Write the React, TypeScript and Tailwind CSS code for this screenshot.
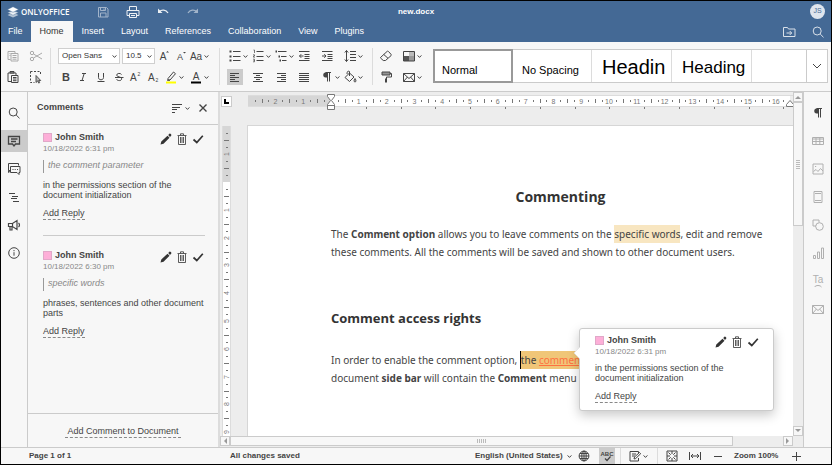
import React from "react";

type Kids = { children?: React.ReactNode };

/* ---------- drawing helpers ---------- */

function Ico({ children, className = "" }: Kids & { className?: string }) {
  return (
    <svg
      viewBox="0 0 16 16"
      className={"size-4 shrink-0 " + className}
      fill="none"
      stroke="currentColor"
      strokeWidth="1"
      aria-hidden="true"
    >
      {children}
    </svg>
  );
}

function Chevron({ className = "" }: { className?: string }) {
  return (
    <svg viewBox="0 0 5 5" className={"size-[5px] shrink-0 " + className} fill="none" stroke="currentColor" aria-hidden="true">
      <path d="M.6 1.4 2.5 3.4 4.4 1.4" />
    </svg>
  );
}

function Glyph({ children, size = 11, weight = 400 }: Kids & { size?: number; weight?: number }) {
  return (
    <text x="8" y="12" textAnchor="middle" fontSize={size} fontWeight={weight} fill="currentColor" stroke="none">
      {children}
    </text>
  );
}

/* ---------- icons ---------- */

const icons = {
  save: <path d="M3.5 3.5h8l1.500 1.500v8h-9.500zM5.500 3.500v3h5v-3M5.500 13v-4h5.500v4M9 4.500v1.500" />,
  print: (
    <>
      <path d="M4.500 6.500v-4h7v4M4.500 11.500h-2.500v-5h12v5h-2.500" />
      <path d="M4.500 9.500h7v4h-7zM6 11.500h4" />
    </>
  ),
  undo: (
    <>
      <path d="M3 4.500v4.500h4.500z" fill="currentColor" stroke="none" />
      <path d="M4.500 7.500c2-2.200 6.500-2 8.500 1.500" strokeWidth="1.300" />
    </>
  ),
  redo: (
    <>
      <path d="M13 4.500v4.500h-4.500z" fill="currentColor" stroke="none" />
      <path d="M11.500 7.500c-2-2.200-6.500-2-8.500 1.500" strokeWidth="1.300" />
    </>
  ),
  folder: <path d="M2.500 12.500v-9h4l1 1.500h6.500v7.500zM5.500 9h5M8.700 7l2 2-2 2" />,
  search: (
    <>
      <circle cx="7.200" cy="7" r="4" />
      <path d="M10.200 10 13.500 13.300" />
    </>
  ),
  copy: <path d="M5.500 11.500h-2.500v-8h7v2M6 5.500h7v7.500h-7zM4.500 5.500h1M7.500 7.500h4M7.500 9.500h4M7.500 11.200h4M4.500 7.500h1" />,
  paste: (
    <>
      <path d="M6 12.500h-3v-8.500h8v2" />
      <path d="M5 4h4v-1.500h-4zM6.500 6.500h6.500v7h-6.500zM8 8.500h3.500M8 10h3.500M8 11.700h3.500" />
    </>
  ),
  cut: (
    <>
      <circle cx="4" cy="5" r="1.700" />
      <circle cx="4" cy="11" r="1.700" />
      <path d="M5.500 6 14 11M5.500 10 14 5" />
    </>
  ),
  select: (
    <>
      <path d="M2.500 2.500h10v4M2.500 2.500v11h4" strokeDasharray="2 1.500" />
      <path d="M8 6.500v7l1.700-1.600 1 2.200 1-.500-1-2.100h2z" fill="currentColor" fillOpacity=".35" strokeWidth=".900" />
    </>
  ),
  grow: (
    <>
      <Glyph size={10}>A</Glyph>
      <path d="M11 4.500 12.500 3 14 4.500z" fill="currentColor" stroke="none" />
    </>
  ),
  shrink: (
    <>
      <Glyph size={9}>A</Glyph>
      <path d="M11 4 12.500 5.500 14 4z" fill="currentColor" stroke="none" />
    </>
  ),
  caseAa: <Glyph size={10}>Aa</Glyph>,
  bold: <Glyph size={11} weight={700}>B</Glyph>,
  italic: <path d="M7 4.500h4M5 11.500h4M9.200 4.500 7 11.500" />,
  underline: <path d="M5.500 4v4.500c0 3 5 3 5 0v-4.500M4.500 12.500h7" />,
  strike: (
    <>
      <path d="M10.500 5.500c-.800-1.600-4.800-1.500-4.800.600 0 2.300 5 1.300 5 3.700 0 2.300-4.300 2.300-5.200.400" />
      <path d="M4 8.500h8.500" />
    </>
  ),
  sup: (
    <>
      <text x="2" y="12" fontSize="10" fill="currentColor" stroke="none">A</text>
      <text x="9.500" y="7" fontSize="5" fill="currentColor" stroke="none">2</text>
    </>
  ),
  sub: (
    <>
      <text x="2" y="12" fontSize="10" fill="currentColor" stroke="none">A</text>
      <text x="9.500" y="13" fontSize="5" fill="currentColor" stroke="none">2</text>
    </>
  ),
  marker: (
    <>
      <path d="M5 9.500 10.500 3l2 1.700-5.500 6.300H5zM4 11.200h3" />
      <path d="M3 13.500h10" stroke="#ffff00" strokeWidth="2" />
    </>
  ),
  color: (
    <>
      <text x="8" y="11" textAnchor="middle" fontSize="10" fill="currentColor" stroke="none">A</text>
      <path d="M3 13.500h10" stroke="#000" strokeWidth="2" />
    </>
  ),
  bullets: (
    <>
      <path d="M6 3.500h7.500M6 8.500h7.500M6 12.500h7.500" />
      <path d="M2.500 3.500h2M2.500 8.500h2M2.500 12.500h2" strokeWidth="2" />
    </>
  ),
  numbers: (
    <>
      <path d="M6.500 3.500h7M6.500 8.500h7M6.500 12.500h7" />
      <path d="M3.500 2h1v3M3 6.800h1.500v1.200h-1v1.200h1.500M3 11.200h1.500v2.600h-1.500M3.500 12.500h1" strokeWidth=".700" />
    </>
  ),
  multi: (
    <>
      <path d="M5 3.500h8.500M8 8.500h5.500M9 12.500h4.500" />
      <path d="M2.500 3.500h1.500M5.500 8.500h1.500M6.500 12.500h1.500" strokeWidth="2" />
    </>
  ),
  outdent: <path d="M3 3.500h10.500M8.500 6.500h5M8.500 8.500h5M8.500 10.500h5M3 12.500h10.500M7.500 8h-4M5.200 6.200 3.500 8l1.700 1.800" />,
  indent: <path d="M3 3.500h10.500M8.500 6.500h5M8.500 8.500h5M8.500 10.500h5M3 12.500h10.500M3 8h4M5.300 6.200 7 8l-1.700 1.800" />,
  spacing: <path d="M8 3.500h6M8 6.500h6M8 9.500h6M8 12.500h6M4.500 2.500v11M2.800 4.500 4.500 2.500 6.200 4.500M2.800 11.500l1.700 2 1.700-2" />,
  left: <path d="M3 4.500h9M3 6.500h5M3 8.500h9M3 10.500h5M3 12.500h9" />,
  center: <path d="M3 4.500h10M6 6.500h4M4 8.500h8M6 10.500h4M3 12.500h10" />,
  right: <path d="M4 4.500h9M8 6.500h5M4 8.500h9M8 10.500h5M4 12.500h9" />,
  justify: <path d="M3 4.500h10M3 6.500h10M3 8.500h10M3 10.500h10M3 12.500h10" />,
  pilcrow: (
    <>
      <path d="M8.500 3.500h-2c-3 0-3 5 0 5h2z" fill="currentColor" stroke="none" />
      <path d="M8.500 3.500v9M10.500 3.500v9M6.500 3.500h5.500" />
    </>
  ),
  bucket: <path d="M7.500 4 3 8.500l4.500 4 4.500-4.500zM7.500 7v-4.500c-2-1-2.500.500-2.500 2.500M13 9.500c-1.500 2-1 3.500 0 3.500s1.500-1.500 0-3.500z" />,
  eraser: <path d="M2.500 9.500 9 3.500c.600-.500 1-.500 1.500 0l2.500 2.800c.400.500.400 1 0 1.400l-5.500 4.800h-2.200l-2.700-2.400zM5.800 6.500l4.200 3.800" />,
  roller: (
    <>
      <path d="M4 3h8v3h-8z" fill="currentColor" fillOpacity=".55" />
      <path d="M12 4.500h1.500v3.500h-5v2" />
      <path d="M8 9.500v4" strokeWidth="2" />
    </>
  ),
  scheme: (
    <>
      <path d="M3 8h5v5h-5z" fill="#555" stroke="none" />
      <path d="M8 8h5v5h-5z" fill="#999" stroke="none" />
      <path d="M8 3h5v5h-5z" fill="#bbb" stroke="none" />
      <path d="M2.500 3.500h11v9.500h-11z" />
    </>
  ),
  mail: <path d="M2.500 4.500h11v8h-11zM2.500 4.500 8 9.500l5.500-5M2.500 12.500 6.500 8M13.500 12.500 9.500 8" />,
  comment: <path d="M2.500 3.500h11v7.500h-4l-1.500 2-1.500-2h-4zM5 6h6.500M5 8.500h5" strokeWidth="1.300" />,
  chat: <path d="M4.500 9.500h-2v-7h10v2M4.500 5.500h9.500v6h-1v2l-2-2h-6.500zM6.500 8.500h1M8.700 8.500h1M11 8.500h1M2.500 9.500v2l2-1.500" />,
  outline: <path d="M3 4.500h6M6 7.500h6M5 9.500h6M7 12.500h6" />,
  megaphone: <path d="M2.500 6.500h4l4.500-3v9l-4.500-3h-4zM6.500 6.500v3M4 9.500v3.500h2v-3.500M12.500 6c1.300 1 1.300 3 0 4" strokeWidth="1.200" />,
  info: (
    <>
      <circle cx="8" cy="8" r="5.300" />
      <path d="M8 7.200v3.500M8 5v1.200" />
    </>
  ),
  sort: <path d="M3 4.500h10M3 7.500h8M3 9.500h5M3 12.500h3" />,
  close: <path d="M4.500 4.500 11.500 11.500M11.500 4.500 4.500 11.500" strokeWidth="1.400" />,
  pencil: <path d="M2.500 13.500 3.300 10.500 9.500 4.700 11.500 6.700 5.500 12.700zM10.200 4l1.300-1.300c.700-.500 2.300.900 1.800 1.800L12 5.900z" fill="currentColor" stroke="none" />,
  trash: <path d="M3.500 4.500h9M6.500 4.300v-1.500h3v1.500M4.500 5v8.500h7v-8.500M6.500 6v6M8 6v6M9.500 6v6" strokeWidth=".800" />,
  check: <path d="M3.500 8.500 6.800 11.500 12.800 4.800" strokeWidth="1.700" />,
  table: <path d="M2.500 4.500h11v7h-11zM2.500 6h11M2.500 8.500h11M6 4.500v7M9.800 4.500v7" />,
  image: <path d="M3 3h10v10h-10zM3.500 10.500l2.500-2 2 2 2.500-3 2.500 2.500M5 5.500h1.200" />,
  page: <path d="M4 2.500h8v11h-8zM5 4.500h6M5 11.500h6" />,
  shape: (
    <>
      <path d="M6 9h-3v-6h6v2.500" />
      <circle cx="9.500" cy="9.500" r="3.800" />
    </>
  ),
  chart: <path d="M3.500 10.500h2v3h-2zM7.500 7h2v6.500h-2zM11.500 3h2v10.500h-2z" />,
  textArt: (
    <>
      <text x="8" y="10" textAnchor="middle" fontSize="10" fill="currentColor" stroke="none">Ta</text>
      <path d="M4.500 14c1.500-2 5.500-2 7 0" />
    </>
  ),
  globe: (
    <>
      <circle cx="8" cy="8" r="4.900" />
      <ellipse cx="8" cy="8" rx="2.200" ry="4.900" />
      <path d="M3 8h10M8 3v10M4 5.500h8M4 10.500h8" />
    </>
  ),
  spell: (
    <>
      <text x="8" y="8" textAnchor="middle" fontSize="6" fontWeight="700" fill="currentColor" stroke="none">ABC</text>
      <path d="M6 10.500 8 12.500 11.500 8.500" strokeWidth="1.200" />
    </>
  ),
  track: <path d="M11.500 5v-1.500h-8.500v9.500h8.500v-3M5 6h4M5 8h3M7 11l.500-2 5-4.500 1.200 1.200-5 4.800z" />,
  fitPage: <path d="M3 3h10v10h-10zM8 3v3M8 10v3M3 8h3M10 8h3M4.500 4.500l2.200 2.200M11.500 4.500 9.300 6.700M4.500 11.500l2.200-2.200M11.500 11.500 9.300 9.300" />,
  fitWidth: <path d="M2.500 4v8M13.500 4v8M4 8h8M6 6 4 8l2 2M10 6l2 2-2 2" />,
  minus: <path d="M4 8.500h8" />,
  plus: <path d="M4 8.500h9M8.500 4v9" />,
};

type IconName = keyof typeof icons;

/* ---------- top bar ---------- */

function TopBar() {
  const tabs = ["File", "Home", "Insert", "Layout", "References", "Collaboration", "View", "Plugins"];
  return (
    <header className="bg-[#446995] text-white">
      <div className="grid h-5 grid-cols-[1fr_auto_1fr] items-center pt-px">
        <div className="flex items-center">
          <a href="#home" className="flex w-[86px] items-center gap-[2px] pl-[6px]">
            <svg viewBox="0 0 12 12" className="size-3" aria-hidden="true">
              <path d="M6 6.800 11.500 9 6 11.600.500 9z" fill="#fff" fillOpacity=".6" />
              <path d="M6 4.400 11.500 6.600 6 9.200.500 6.600z" fill="#fff" fillOpacity=".8" stroke="#446995" strokeWidth=".4" />
              <path d="M6 .800 11.500 3.500 6 6.200.500 3.500z" fill="#fff" stroke="#446995" strokeWidth=".4" />
            </svg>
            <span className="font-['Open_Sans',sans-serif] text-[8px] font-semibold">ONLYOFFICE</span>
          </a>
          <div className="flex pl-2">
            {(["save", "print", "undo", "redo"] as IconName[]).map((n) => (
              <button
                key={n}
                aria-label={n}
                className={"flex w-[30px] " + (n === "save" || n === "redo" ? "opacity-50" : "opacity-90")}
              >
                <Ico>{icons[n]}</Ico>
              </button>
            ))}
          </div>
        </div>
        <h1 className="text-[8px] font-bold">new.docx</h1>
        <div className="flex justify-end pr-[6px]">
          <button className="flex size-[15px] items-center justify-center rounded-full bg-[#dfe5ee] text-[7px] text-[#446995]">JS</button>
        </div>
      </div>
      <div className="flex h-[21px] items-stretch">
        <nav className="flex flex-1">
          {tabs.map((t) => (
            <button
              key={t}
              className={
                t === "Home"
                  ? "bg-[#f7f7f7] px-[9px] text-[#333]"
                  : t === "File"
                    ? "pr-2 pl-[7px]"
                    : "pr-2 pl-[9px]"
              }
            >
              {t}
            </button>
          ))}
        </nav>
        <div className="flex items-center gap-[13px] pr-[5px] opacity-80">
          <button aria-label="Open file location"><Ico>{icons.folder}</Ico></button>
          <button aria-label="Search"><Ico>{icons.search}</Ico></button>
        </div>
      </div>
    </header>
  );
}

/* ---------- ribbon ---------- */

function Tool({ name, menu = false, active = false, dim = false }: { name: IconName; menu?: boolean; active?: boolean; dim?: boolean }) {
  return (
    <button aria-label={name} className={"flex w-[23px] items-center pl-[3px] " + (dim ? "text-[#aaa]" : "text-[#444]")}>
      <span className={active ? "bg-[#cbcbcb]" : ""}><Ico>{icons[name]}</Ico></span>
      {menu && <Chevron />}
    </button>
  );
}

function WideTool({ name }: { name: IconName }) {
  return (
    <button aria-label={name} className="flex w-[25px] items-center text-[#444]">
      <Ico>{icons[name]}</Ico>
      <Chevron />
    </button>
  );
}

function Divider() {
  return <div className="my-[6px] w-px shrink-0 bg-[#dcdcdc]" />;
}

function Picker({ label, value, className }: { label: string; value: string; className: string }) {
  return (
    <label className={"relative block " + className}>
      <select
        aria-label={label}
        className="h-4 w-full appearance-none rounded-none border border-[#cfcfcf] bg-white pl-[3px] text-[8px] text-[#333]"
      >
        <option>{value}</option>
      </select>
      <Chevron className="pointer-events-none absolute top-[6px] right-[3px]" />
    </label>
  );
}

const row = "flex h-4 items-center";

function Ribbon() {
  const styles = [
    { name: "Normal", size: "pt-1 text-[11px]" },
    { name: "No Spacing", size: "pt-[5px] text-[11px]" },
    { name: "Headin", size: "pt-[2px] text-[20px]" },
    { name: "Heading", size: "pt-[3px] text-[17px]" },
  ];
  return (
    <div className="flex h-[50px] shrink-0 border-b border-[#cbcbcb] bg-[#f7f7f7]">
      <div className="flex w-[49px] flex-col gap-[5px] pt-[6px] pl-px">
        <div className={row}><Tool name="copy" dim /><Tool name="cut" dim /></div>
        <div className={row}><Tool name="paste" /><Tool name="select" /></div>
      </div>
      <Divider />
      <div className="flex w-[168px] flex-col gap-[5px] pt-[6px] pl-[6px]">
        <div className={row + " pl-px"}>
          <Picker label="Font" value="Open Sans" className="w-[62px]" />
          <Picker label="Font size" value="10.5" className="ml-[2px] w-[33px]" />
          <button aria-label="Increase font size" className="w-[17px]"><Ico>{icons.grow}</Ico></button>
          <button aria-label="Decrease font size" className="w-4"><Ico>{icons.shrink}</Ico></button>
          <WideTool name="caseAa" />
        </div>
        <div className={row}>
          <div className="grid w-[106px] shrink-0 grid-cols-6 justify-items-center text-[#444]">
            {(["bold", "italic", "underline", "strike", "sup", "sub"] as IconName[]).map((n) => (
              <button key={n} aria-label={n}><Ico>{icons[n]}</Ico></button>
            ))}
          </div>
          <WideTool name="marker" />
          <WideTool name="color" />
        </div>
      </div>
      <Divider />
      <div className="flex w-[152px] flex-col gap-[5px] pt-[6px] pl-[4px]">
        <div className={row}>
          <Tool name="bullets" menu /><Tool name="numbers" menu /><Tool name="multi" menu />
          <Tool name="outdent" /><Tool name="indent" /><Tool name="spacing" menu />
        </div>
        <div className={row}>
          <Tool name="left" active /><Tool name="center" /><Tool name="right" />
          <Tool name="justify" /><Tool name="pilcrow" menu /><Tool name="bucket" menu />
        </div>
      </div>
      <Divider />
      <div className="flex w-[60px] shrink-0 flex-col gap-[5px] pt-[6px] pl-[2px]">
        <div className={row}><Tool name="eraser" /><Tool name="scheme" menu /></div>
        <div className={row}><Tool name="roller" /><Tool name="mail" menu /></div>
      </div>
      <div className="mt-[7px] mr-[3px] flex h-[34px] min-w-0 flex-1 border border-[#cbcbcb] bg-white">
        {styles.map((s, i) => (
          <button
            key={s.name}
            className={
              "flex w-20 shrink-0 items-start overflow-hidden leading-[30px] whitespace-nowrap text-black " +
              s.size +
              (i === 0 ? " -m-px border-2 border-[#999] pl-[7px]" : " border-r border-[#dcdcdc] pl-[10px]")
            }
          >
            {s.name}
          </button>
        ))}
        <div className="flex-1" />
        <button aria-label="More styles" className="flex w-[21px] items-center justify-center border-l border-[#cbcbcb] text-[#444]">
          <svg viewBox="0 0 10 6" className="h-[6px] w-[10px]" fill="none" stroke="currentColor" aria-hidden="true"><path d="M1 1 5 5 9 1" /></svg>
        </button>
      </div>
    </div>
  );
}

/* ---------- comments ---------- */

function CommentHead({ date }: { date: string }) {
  return (
    <div className="flex h-[22px] items-start justify-between">
      <div className="leading-[11px]">
        <div className="flex items-center gap-[3px] font-bold text-[#444]">
          <span className="size-[9px] border border-[#e0a8c8] bg-[#fdafd8]" />
          John Smith
        </div>
        <div className="text-[8px] leading-[11px] text-[#888]">{date}</div>
      </div>
      <div className="-mt-px -mr-px flex text-[#333]">
        <button aria-label="Edit"><Ico>{icons.pencil}</Ico></button>
        <button aria-label="Delete"><Ico>{icons.trash}</Ico></button>
        <button aria-label="Resolve"><Ico>{icons.check}</Ico></button>
      </div>
    </div>
  );
}

function CommentBody({ text, className }: { text: string; className: string }) {
  return (
    <>
      <p className={"leading-[10px] text-[#444] " + className}>{text}</p>
      <button className="mt-2 block border-b border-dashed border-[#888] text-left leading-[11px] text-[#444]">Add Reply</button>
    </>
  );
}

function Comments() {
  const items = [
    { date: "10/18/2022 6:31 pm", quote: "the comment parameter", text: "in the permissions section of the document initialization" },
    { date: "10/18/2022 6:30 pm", quote: "specific words", text: "phrases, sentences and other document parts" },
  ];
  return (
    <section className="flex w-[192px] shrink-0 flex-col border-r-2 border-[#dcdcdc] bg-[#f7f7f7]">
      <div className="flex h-[33px] items-center border-b border-[#cbcbcb] pr-[7px] pl-[9px] text-[#444]">
        <h2 className="flex-1 font-bold">Comments</h2>
        <button aria-label="Sort" className="flex w-[26px] items-center"><Ico>{icons.sort}</Ico><Chevron /></button>
        <button aria-label="Close"><Ico>{icons.close}</Ico></button>
      </div>
      <div className="flex-1 pr-[13px] pl-[15px]">
        {items.map((c, i) => (
          <article key={c.date} className={i === 0 ? "border-b border-[#cbcbcb] pt-[7px] pb-[15px]" : "pt-[14px]"}>
            <CommentHead date={c.date} />
            <blockquote className="mt-[6px] h-[13px] border-l border-[#999] pl-1 leading-[10px] text-[#888] italic">{c.quote}</blockquote>
            <CommentBody text={c.text} className="mt-[7px]" />
          </article>
        ))}
      </div>
      <div className="flex h-[34px] items-center justify-center border-t border-[#cbcbcb] pt-[3px]">
        <button className="border-b border-dashed border-[#888] px-[2px] leading-[11px] text-[#444]">Add Comment to Document</button>
      </div>
    </section>
  );
}

/* ---------- rulers ---------- */

const CM = 27.8;

function HorizontalRuler() {
  const zero = 83;
  const quarters = Array.from({ length: 78 }, (_, i) => i - 11);
  return (
    <svg className="h-4 w-[546px]" fill="#777" fontSize="7" aria-hidden="true">
      <rect x="0" y="2" width={zero} height="10" fill="#d6d6d6" />
      <rect x={zero} y="2" width="459" height="10" fill="#fff" />
      <path d="M0 1.500H546M0 12.500H546" stroke="#dcdcdc" />
      {quarters.map((q) => {
        const x = zero + (q * CM) / 4;
        if (q === 0 || x > 538) return null;
        if (q % 4 === 0) return <text key={q} x={x} y="9.500" textAnchor="middle">{Math.abs(q / 4)}</text>;
        return q % 2 === 0
          ? <rect key={q} x={Math.round(x)} y="5" width="1" height="4" />
          : <rect key={q} x={Math.round(x)} y="6" width="1" height="2" />;
      })}
      {Array.from({ length: 13 }, (_, i) => (
        <rect key={i} x={Math.round(zero + (i + 1) * 34.8)} y="13" width="1" height="2" />
      ))}
      <path d="M79.500.500h7v2l-3 4 3 4v5h-7v-5l3-4-3-4zM79.500 11.500h7" fill="#fff" stroke="#777" />
      <path d="M538.500 12.500h7v-2l-3.500-4-3.500 4z" fill="#fff" stroke="#777" />
    </svg>
  );
}

function VerticalRuler() {
  const zero = 56;
  const quarters = Array.from({ length: 45 }, (_, i) => i - 7);
  return (
    <svg className="h-[311px] w-[9px]" fill="#777" fontSize="7" aria-hidden="true">
      <rect width="9" height={zero} fill="#d6d6d6" />
      <rect y={zero} width="9" height="255" fill="#fff" />
      <path d="M.500 0V311M8.500 0V311" stroke="#dcdcdc" />
      {quarters.map((q) => {
        const y = zero + (q * CM) / 4;
        if (q === 0 || y > 308) return null;
        if (q % 4 === 0)
          return <text key={q} transform={`translate(7 ${Math.round(y)}) rotate(-90)`} textAnchor="middle">{Math.abs(q / 4)}</text>;
        return q % 2 === 0
          ? <rect key={q} x="2" y={Math.round(y)} width="5" height="1" />
          : <rect key={q} x="4" y={Math.round(y)} width="2" height="1" />;
      })}
    </svg>
  );
}

/* ---------- editor ---------- */

function ScrollArrow({ d, label }: { d: string; label: string }) {
  return (
    <button aria-label={label} className="flex size-[10px] shrink-0 items-center justify-center border border-[#cbcbcb] bg-[#f7f7f7]">
      <svg viewBox="0 0 6 6" className="size-[6px]" fill="#999" aria-hidden="true"><path d={d} /></svg>
    </button>
  );
}

function Balloon() {
  return (
    <aside className="absolute top-[202px] left-[331px] w-[195px] rounded-[3px] border border-[#cbcbcb] bg-white pt-[6px] pr-[13px] pb-[7px] pl-[15px] font-['Liberation_Sans',Arial,sans-serif] text-[9px] whitespace-normal shadow-[0_4px_12px_rgba(0,0,0,0.22)]">
      <svg viewBox="0 0 8 14" className="absolute top-[17px] -left-[7px] h-[14px] w-2" aria-hidden="true">
        <path d="M8 0 1 7 8 14z" fill="#fff" />
        <path d="M7 1 1 7 7 13" fill="none" stroke="#ddd" strokeWidth=".6" />
      </svg>
      <CommentHead date="10/18/2022 6:31 pm" />
      <CommentBody text="in the permissions section of the document initialization" className="mt-[6px]" />
    </aside>
  );
}

function Page() {
  return (
    <div className="relative min-w-0 flex-1 border-t border-l border-[#d6d6d6] bg-white pl-[83px] font-['Noto_Sans',sans-serif] text-[10px] leading-[18px] whitespace-nowrap text-[#444]">
      <h2 className="w-[459px] pt-[61px] text-center font-['Open_Sans',sans-serif] text-[14px] leading-5 font-bold text-[#333]">Commenting</h2>
      <p className="mt-[18px]">
        The <b>Comment option</b> allows you to leave comments on the{" "}
        <mark className="inline-block bg-[#f8e6c1] text-inherit">specific words</mark>, edit and remove
        <br />
        these comments. All the comments will be saved and shown to other document users.
      </p>
      <h3 className="mt-[47px] font-['Open_Sans',sans-serif] text-[13px] leading-5 font-bold text-[#333]">Comment access rights</h3>
      <p className="mt-[23px]">
        In order to enable the comment option,{" "}
        <mark className="inline-block bg-[#f0c678] text-inherit">
          <span className="border-l border-black py-[2px]">the</span>{" "}
          <a href="#parameter" className="text-[#ff7040] underline">comment</a>
        </mark>
        <br />
        document <b>side bar</b> will contain the <b>Comment</b> menu
      </p>
      <Balloon />
    </div>
  );
}

function Editor() {
  return (
    <main className="flex min-w-0 flex-1 flex-col bg-[#ededed]">
      <div className="flex min-h-0 flex-1">
        <div className="flex w-[27px] shrink-0 flex-col pl-px">
          <button aria-label="Tab stop" className="mt-[4px] mb-[19px] flex size-[11px] items-center justify-center border border-[#cbcbcb] bg-white">
            <span className="size-[5px] border-b-2 border-l-2 border-black" />
          </button>
          <div className="min-h-0 flex-1 overflow-hidden pl-px"><VerticalRuler /></div>
        </div>
        <div className="flex min-w-0 flex-1 flex-col">
          <div className="h-[33px] overflow-hidden pt-[2px] pl-px"><HorizontalRuler /></div>
          <Page />
        </div>
        <div className="flex w-[10px] shrink-0 flex-col">
          <ScrollArrow label="Scroll up" d="M0 5 3 2 6 5z" />
          <div className="flex h-[124px] flex-col items-center justify-center gap-px border border-[#cbcbcb] bg-[#f7f7f7]">
            {[0, 1, 2, 3, 4].map((i) => <span key={i} className="h-px w-1 bg-[#bbb]" />)}
          </div>
          <div className="flex-1" />
          <ScrollArrow label="Scroll down" d="M0 1 3 4 6 1z" />
        </div>
      </div>
      <div className="flex h-[11px] pr-[10px]">
        <ScrollArrow label="Scroll left" d="M5 0 2 3 5 6z" />
        <div className="flex h-[10px] flex-1">
          <div className="flex w-[91%] items-center justify-center gap-px border border-[#cbcbcb] bg-[#f7f7f7]">
            {[0, 1, 2, 3, 4].map((i) => <span key={i} className="h-1 w-px bg-[#bbb]" />)}
          </div>
        </div>
        <ScrollArrow label="Scroll right" d="M1 0 4 3 1 6z" />
      </div>
    </main>
  );
}

/* ---------- side bars and status ---------- */

function SideBar({ names, className, active, dark = [] }: { names: IconName[]; className: string; active?: IconName; dark?: IconName[] }) {
  return (
    <nav className={"flex shrink-0 flex-col gap-[6px] bg-[#f7f7f7] pt-[10px] " + className}>
      {names.map((n) => (
        <button
          key={n}
          aria-label={n}
          className={
            "flex h-[22px] items-center justify-center " +
            (n === active ? "bg-[#cbcbcb] " : "") +
            (dark.includes(n) ? "text-[#444]" : "text-[#b0b0b0]")
          }
        >
          <Ico>{icons[n]}</Ico>
        </button>
      ))}
    </nav>
  );
}

function StatusBar() {
  return (
    <footer className="flex h-[17px] shrink-0 items-center border-t border-[#cbcbcb] bg-[#f7f7f7] text-[8px] font-bold text-[#444]">
      <span className="w-[229px] pl-[28px]">Page 1 of 1</span>
      <span className="flex-1">All changes saved</span>
      <button className="flex w-[101px] items-center gap-1 font-bold">English (United States)<Chevron /></button>
      <button aria-label="Language" className="w-[23px]"><Ico>{icons.globe}</Ico></button>
      <button aria-label="Spell check" className="bg-[#cbcbcb]"><Ico>{icons.spell}</Ico></button>
      <span className="ml-[5px] h-4 w-px bg-[#dcdcdc]" />
      <button aria-label="Track changes" className="ml-[6px] flex w-[30px] items-center"><Ico>{icons.track}</Ico><Chevron /></button>
      <span className="h-4 w-px bg-[#dcdcdc]" />
      <button aria-label="Fit to page" className="ml-[6px] w-[23px]"><Ico>{icons.fitPage}</Ico></button>
      <button aria-label="Fit to width" className="w-[23px]"><Ico>{icons.fitWidth}</Ico></button>
      <button aria-label="Zoom out" className="w-6"><Ico>{icons.minus}</Ico></button>
      <span className="w-[54px]">Zoom 100%</span>
      <button aria-label="Zoom in" className="mr-[27px]"><Ico>{icons.plus}</Ico></button>
    </footer>
  );
}

export default function App() {
  return (
    <div className="flex h-screen flex-col overflow-hidden border border-black bg-[#f7f7f7] font-['Liberation_Sans',Arial,sans-serif] text-[9px] text-[#444]">
      <TopBar />
      <Ribbon />
      <div className="flex min-h-0 flex-1">
        <SideBar
          className="w-[27px] border-r border-[#cbcbcb]"
          names={["search", "comment", "chat", "outline", "megaphone", "info"]}
          active="comment"
          dark={["search", "comment", "chat", "outline", "megaphone", "info"]}
        />
        <Comments />
        <Editor />
        <SideBar
          className="w-[28px] border-l border-[#cbcbcb]"
          names={["pilcrow", "table", "image", "page", "shape", "chart", "textArt", "mail"]}
          dark={["pilcrow"]}
        />
      </div>
      <StatusBar />
    </div>
  );
}
